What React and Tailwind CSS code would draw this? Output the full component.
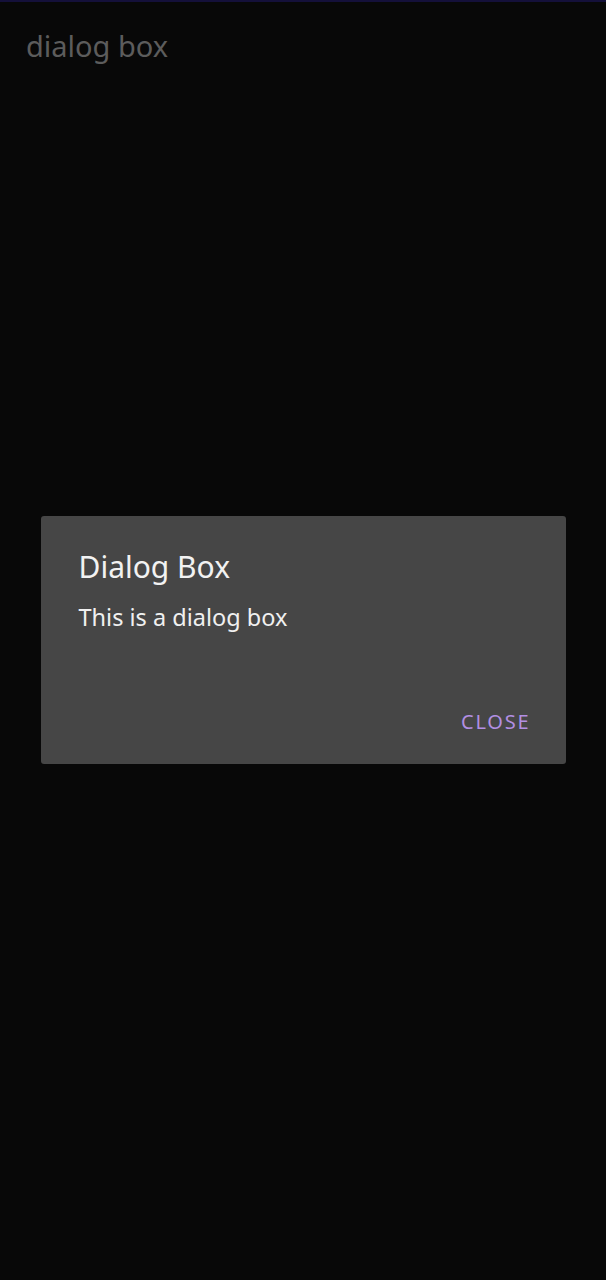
import React, { useState } from "react";

export default function App() {
  const [open, setOpen] = useState(true);

  return (
    <div
      className="relative h-[1280px] w-full bg-[#080808] border-t-2 border-[#14103a]"
      style={{ fontFamily: '"Noto Sans", "Open Sans", sans-serif' }}
    >
      <h1 className="pl-[26px] pt-[25px] text-[29px] leading-[38px] text-[#5c5c5c]">dialog box</h1>

      {open && (
        <div className="fixed inset-0 flex items-center justify-center">
          <div className="w-[525px] h-[248px] rounded-[3px] bg-[#464646] flex flex-col pl-[38px] pr-[35px] pt-[31px] pb-[30px]">
            <h2 className="text-[30px] leading-[40px] text-[#f2f2f2]">Dialog Box</h2>
            <p className="mt-[15px] text-[23.5px] leading-[30px] text-[#f0f0f0]">This is a dialog box</p>
            <div className="mt-auto flex justify-end">
              <button
                onClick={() => setOpen(false)}
                className="text-[20px] leading-[24px] tracking-[1.8px] text-[#b28fe3]"
              >
                CLOSE
              </button>
            </div>
          </div>
        </div>
      )}
    </div>
  );
}
